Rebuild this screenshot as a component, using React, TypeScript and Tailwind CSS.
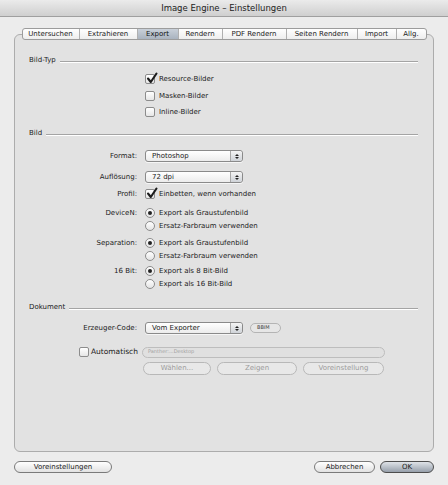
import React from 'react';

const tabs = [
  { label: 'Untersuchen', w: 'w-[56px]' },
  { label: 'Extrahieren', w: 'w-[58px]' },
  { label: 'Export', w: 'w-[41px]', active: true },
  { label: 'Rendern', w: 'w-[44px]' },
  { label: 'PDF Rendern', w: 'w-[64px]' },
  { label: 'Seiten Rendern', w: 'w-[71px]' },
  { label: 'Import', w: 'w-[39px]' },
  { label: 'Allg.', w: 'w-[30px]' },
];

const Checkbox = ({ checked = false }: { checked?: boolean }) => (
  <span className="relative inline-block w-[10px] h-[10px] shrink-0 rounded-[2px] border border-[#8c8c8c] bg-gradient-to-b from-white to-[#e6e6e6]">
    {checked && (
      <svg viewBox="0 0 12 12" className="absolute left-[0px] top-[-3px] w-[12px] h-[12px]">
        <path d="M2 6.5 L4.8 10 L10.5 1.5" fill="none" stroke="#1c1c1c" strokeWidth="2.1" strokeLinecap="round" strokeLinejoin="round" />
      </svg>
    )}
  </span>
);

const Radio = ({ checked = false }: { checked?: boolean }) => (
  <span className="inline-flex items-center justify-center w-[10px] h-[10px] shrink-0 rounded-full border border-[#8c8c8c] bg-gradient-to-b from-white to-[#e4e4e4]">
    {checked && <span className="w-[4px] h-[4px] rounded-full bg-[#222]" />}
  </span>
);

const Select = ({ value }: { value: string }) => (
  <div className="flex items-center w-[98px] h-[12px] rounded-[3px] border border-[#8a8a8a] bg-gradient-to-b from-white to-[#ececec] shadow-[0_1px_0_rgba(255,255,255,0.7)]">
    <span className="flex-1 pl-[6px] leading-none">{value}</span>
    <span className="flex flex-col items-center justify-center w-[12px] h-full border-l border-[#a8a8a8] bg-gradient-to-b from-[#f4f4f4] to-[#cfd3d8] rounded-r-[3px] gap-[1px]">
      <svg viewBox="0 0 6 3" className="w-[4px] h-[2px]"><path d="M0 3 L3 0 L6 3 Z" fill="#222" /></svg>
      <svg viewBox="0 0 6 3" className="w-[4px] h-[2px]"><path d="M0 0 L3 3 L6 0 Z" fill="#222" /></svg>
    </span>
  </div>
);

const SectionHeader = ({ label, mt }: { label: string; mt: string }) => (
  <div className={`flex items-center h-[12px] pl-[14px] pr-[15px] ${mt}`}>
    <span className="leading-none">{label}</span>
    <span className="flex-1 ml-[4px] mt-[4px] h-[2px] border-t border-[#a4a4a4] border-b border-b-white" />
  </div>
);

// label column + control column
const Row = ({ label, mt, children }: { label?: string; mt: string; children: React.ReactNode }) => (
  <div className={`flex items-center h-[12px] ${mt}`}>
    <span className="w-[123px] text-right pr-[1px] leading-none shrink-0">{label ? `${label}:` : ''}</span>
    <div className="flex items-center gap-[4px] pl-[7px]">{children}</div>
  </div>
);

const App = () => {
  return (
    <div className="w-[448px] h-[485px] bg-[#ececec] text-[7px] text-[#1b1b1b] overflow-hidden" style={{ fontFamily: '"DejaVu Sans", "Lucida Grande", sans-serif' }}>
      {/* Title bar */}
      <div className="h-[17px] flex items-center justify-center bg-gradient-to-b from-[#ebebeb] to-[#cfcfcf] border-b border-[#9f9f9f]">
        <span className="text-[8.5px] text-[#222]">Image Engine – Einstellungen</span>
      </div>

      <div className="px-[14px] pt-[11px]">
        {/* Tabs */}
        <div className="relative z-10 flex justify-center -mb-[6px]">
          <div className="flex h-[12px] rounded-[3px] border border-[#9c9c9c] overflow-hidden bg-gradient-to-b from-white to-[#eeeeee]">
            {tabs.map((t, i) => (
              <div
                key={t.label}
                className={`${t.w} flex items-center justify-center leading-none ${i > 0 ? 'border-l border-[#b0b0b0]' : ''} ${
                  t.active ? 'bg-gradient-to-b from-[#c9d0d9] to-[#a9b3bf] text-[#111]' : ''
                }`}
              >
                {t.label}
              </div>
            ))}
          </div>
        </div>

        {/* Panel */}
        <div className="h-[418px] rounded-[6px] border border-[#acacac] bg-[#e2e2e2] pt-[19px]">
          <SectionHeader label="Bild-Typ" mt="mt-0" />
          <Row mt="mt-[7px]"><Checkbox checked /><span>Resource-Bilder</span></Row>
          <Row mt="mt-[5px]"><Checkbox /><span>Masken-Bilder</span></Row>
          <Row mt="mt-[4px]"><Checkbox /><span>Inline-Bilder</span></Row>

          <SectionHeader label="Bild" mt="mt-[9px]" />
          <Row label="Format" mt="mt-[11px]"><Select value="Photoshop" /></Row>
          <Row label="Auflösung" mt="mt-[9px]"><Select value="72 dpi" /></Row>
          <Row label="Profil" mt="mt-[5px]"><Checkbox checked /><span>Einbetten, wenn vorhanden</span></Row>
          <Row label="DeviceN" mt="mt-[7px]"><Radio checked /><span>Export als Graustufenbild</span></Row>
          <Row mt="mt-[1px]"><Radio /><span>Ersatz-Farbraum verwenden</span></Row>
          <Row label="Separation" mt="mt-[5px]"><Radio checked /><span>Export als Graustufenbild</span></Row>
          <Row mt="mt-[1px]"><Radio /><span>Ersatz-Farbraum verwenden</span></Row>
          <Row label="16 Bit" mt="mt-[3px]"><Radio checked /><span>Export als 8 Bit-Bild</span></Row>
          <Row mt="mt-[1px]"><Radio /><span>Export als 16 Bit-Bild</span></Row>

          <SectionHeader label="Dokument" mt="mt-[11px]" />
          <Row label="Erzeuger-Code" mt="mt-[9px]">
            <Select value="Vom Exporter" />
            <div className="ml-[3px] w-[31px] h-[10px] rounded-full border border-[#b4b4b4] bg-[#e6e6e6] flex items-center pl-[6px] text-[5px] text-[#444]">BBIM</div>
          </Row>

          <div className="flex items-center h-[12px] mt-[12px]">
            <div className="w-[127px] flex items-center justify-end gap-[2px] pr-[4px] shrink-0">
              <Checkbox />
              <span className="leading-none text-[7.5px]">Automatisch</span>
            </div>
            <div className="w-[243px] h-[11px] rounded-full border border-[#bdbdbd] bg-[#e0e0e0] flex items-center pl-[5px] text-[5px] text-[#a0a0a0]">
              Panther:...Desktop
            </div>
          </div>

          <div className="flex items-center h-[13px] mt-[4px] pl-[128px] gap-[6px]">
            <div className="w-[68px] h-[13px] rounded-full border border-[#b8b8b8] bg-[#e8e8e8] flex items-center justify-center text-[#9c9c9c]">Wählen...</div>
            <div className="w-[80px] h-[13px] rounded-full border border-[#b8b8b8] bg-[#e8e8e8] flex items-center justify-center text-[#9c9c9c]">Zeigen</div>
            <div className="w-[81px] h-[13px] rounded-full border border-[#b8b8b8] bg-[#e8e8e8] flex items-center justify-center text-[#9c9c9c]">Voreinstellung</div>
          </div>
        </div>

        {/* Bottom buttons */}
        <div className="flex items-center mt-[9px] h-[12px]">
          <div className="w-[98px] h-[12px] rounded-full border border-[#7a7a7a] bg-gradient-to-b from-white to-[#e2e2e2] flex items-center justify-center">Voreinstellungen</div>
          <div className="flex-1" />
          <div className="w-[61px] h-[12px] rounded-full border border-[#7a7a7a] bg-gradient-to-b from-white to-[#e2e2e2] flex items-center justify-center">Abbrechen</div>
          <div className="ml-[5px] w-[54px] h-[12px] rounded-full border border-[#4d4d4d] bg-gradient-to-b from-[#dfe3e8] to-[#97a0ab] flex items-center justify-center">OK</div>
        </div>
      </div>
    </div>
  );
};

export default App;
